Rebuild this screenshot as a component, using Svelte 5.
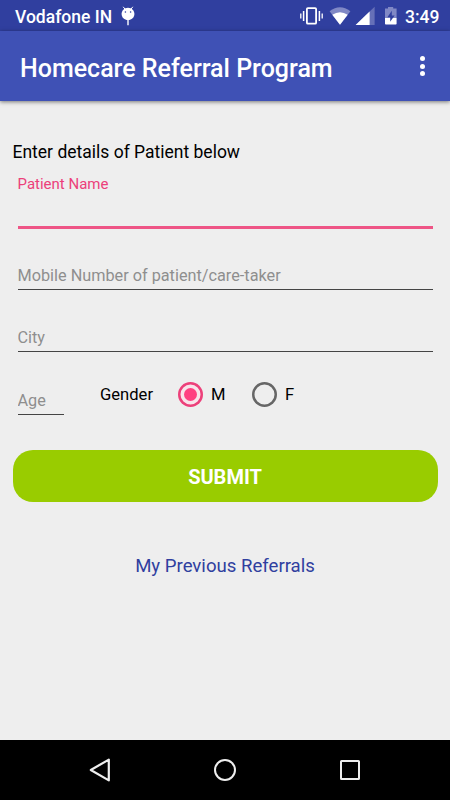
<script>
	let name = '';
	let mobile = '';
	let city = '';
	let age = '';
	let gender = 'M';

	const genders = ['M', 'F'];
</script>

<div class="screen">
	<div class="status-bar">
		<span class="carrier">Vodafone IN</span>
		<svg class="bug" width="14" height="20" viewBox="0 0 14 20" aria-hidden="true">
			<path d="M2.2 0.8 L4.2 3.4 M11.8 0.8 L9.8 3.4" stroke="#fff" stroke-width="1" />
			<path d="M7 1.8 C10.8 1.8 13.4 4.8 13.4 8 C13.4 11.4 10.7 14 7 14 C3.3 14 0.6 11.4 0.6 8 C0.6 4.8 3.2 1.8 7 1.8 Z" fill="#fff" />
			<circle cx="4.4" cy="6" r="0.8" fill="#303f9f" />
			<circle cx="9.6" cy="6" r="0.8" fill="#303f9f" />
			<path d="M7 14 V19.2" stroke="#fff" stroke-width="1.4" />
		</svg>
		<svg class="system" width="100" height="20" viewBox="0 0 100 20" aria-hidden="true">
			<!-- vibrate -->
			<rect x="7.9" y="2.1" width="9.2" height="15.6" rx="1" fill="none" stroke="#fff" stroke-width="1.8" />
			<path d="M4.6 5 V15 M20.4 5 V15" stroke="#fff" stroke-width="1.5" />
			<path d="M1.8 7.5 V12.5 M23.2 7.5 V12.5" stroke="#fff" stroke-width="1.3" />
			<!-- wifi -->
			<path d="M30.6 5.2 Q41 -2.6 51.4 5.2 L41 18.8 Z" fill="#8088c5" />
			<path d="M33.3 8.8 Q41 3.6 48.7 8.8 L41 18.8 Z" fill="#fff" />
			<!-- signal -->
			<path d="M56.6 19 L75.6 0.7 V19 Z" fill="#6670b8" />
			<path d="M56.6 19 L70.6 5.5 V19 Z" fill="#fff" />
			<!-- battery -->
			<path d="M86 2.6 H89 V1 H94.2 V2.6 H97.6 V12 H86 Z" fill="#8088c5" />
			<path d="M86 12 H97.6 V17.8 Q97.6 18.6 96.8 18.6 H86.8 Q86 18.6 86 17.8 Z" fill="#fff" />
			<path d="M92.8 4.8 L88.4 11.2 H91.2 V15.8 L95.6 9.4 H92.8 Z" fill="#303f9f" />
		</svg>
		<span class="clock">3:49</span>
	</div>

	<header class="app-bar">
		<h1>Homecare Referral Program</h1>
		<button class="menu" aria-label="More options">
			<span class="dot"></span>
			<span class="dot"></span>
			<span class="dot"></span>
		</button>
	</header>

	<main class="content">
		<h2>Enter details of Patient below</h2>

		<label class="field name">
			<span>Patient Name</span>
			<input type="text" bind:value={name} />
		</label>
		<input class="field line mobile" type="tel" placeholder="Mobile Number of patient/care-taker" bind:value={mobile} />
		<input class="field line city" type="text" placeholder="City" bind:value={city} />

		<div class="details">
			<input class="line age" type="text" placeholder="Age" bind:value={age} />
			<div class="gender" role="radiogroup" aria-label="Gender">
				<span class="gender-title">Gender</span>
				{#each genders as option}
					<label class="option" class:selected={gender === option}>
						<input type="radio" name="gender" value={option} bind:group={gender} />
						<span class="ring"></span>
						<span class="option-text">{option}</span>
					</label>
				{/each}
			</div>
		</div>

		<button class="submit">SUBMIT</button>
		<button class="previous">My Previous Referrals</button>
	</main>

	<nav class="nav-bar">
		<button aria-label="Back">
			<svg width="24" height="26" viewBox="0 0 24 26">
				<path d="M20.8 2.6 V23.4 L2.8 13 Z" fill="none" stroke="#eee" stroke-width="2.2" stroke-linejoin="round" />
			</svg>
		</button>
		<button aria-label="Home">
			<svg width="24" height="26" viewBox="0 0 24 26">
				<circle cx="12" cy="13" r="10" fill="none" stroke="#eee" stroke-width="2" />
			</svg>
		</button>
		<button aria-label="Recent apps">
			<svg width="24" height="26" viewBox="0 0 24 26">
				<rect x="3" y="4" width="18" height="18" rx="0.5" fill="none" stroke="#eee" stroke-width="2" />
			</svg>
		</button>
	</nav>
</div>

<style>
	:global(body) {
		margin: 0;
	}

	.screen {
		display: flex;
		flex-direction: column;
		width: 450px;
		height: 800px;
		background: #eeeeee;
		font-family: Roboto, sans-serif;
		color: #000;
		overflow: hidden;
	}

	button,
	input {
		box-sizing: border-box;
		margin: 0;
		padding: 0;
		border: 0;
		border-radius: 0;
		background: none;
		font-family: inherit;
		outline: none;
	}

	.status-bar {
		display: flex;
		align-items: center;
		box-sizing: border-box;
		height: 31px;
		padding: 2px 11px 0 15px;
		background: #303f9f;
		color: #fff;
	}

	.carrier {
		font-size: 17.5px;
		font-weight: 500;
		line-height: 20px;
		white-space: nowrap;
		width: 97px;
	}

	.bug {
		margin-left: 8.5px;
		margin-top: -2px;
	}

	.system {
		margin-left: auto;
		margin-top: -2px;
	}

	.clock {
		width: 34px;
		margin-left: 6.5px;
		font-size: 17.5px;
		font-weight: 500;
		line-height: 20px;
	}

	.app-bar {
		display: flex;
		align-items: center;
		justify-content: space-between;
		box-sizing: border-box;
		height: 70px;
		flex: none;
		padding: 4px 18px 0 20px;
		background: #3f51b5;
		box-shadow: 0 1px 4px rgba(0, 0, 0, 0.5);
		color: #fff;
	}

	h1 {
		margin: 0;
		font-size: 25px;
		font-weight: 500;
	}

	.menu {
		display: flex;
		flex-direction: column;
		align-items: center;
		gap: 2.6px;
		width: 19px;
		margin-top: -4px;
	}

	.dot {
		width: 5px;
		height: 5px;
		border-radius: 50%;
		background: #fff;
	}

	.content {
		display: flex;
		flex-direction: column;
		flex: 1;
		padding: 38px 12.5px 0;
	}

	h2 {
		margin: 0;
		font-size: 17.5px;
		font-weight: 400;
		line-height: 26px;
	}

	.field {
		margin: 0 5px;
	}

	.name {
		display: flex;
		flex-direction: column;
		height: 64px;
		padding-top: 9px;
		box-sizing: border-box;
		border-bottom: 3px solid #ee5586;
		color: #ec407a;
		font-size: 15px;
		line-height: 20px;
	}

	.name input {
		flex: 1;
		font-size: 16.25px;
	}

	.line {
		padding-top: 2px;
		border-bottom: 1px solid #444;
		font-size: 16.25px;
	}

	.line::placeholder {
		color: #8e8e8e;
		opacity: 1;
	}

	.mobile {
		height: 31px;
		margin-top: 30px;
	}

	.city {
		height: 31px;
		margin-top: 31px;
	}

	.details {
		display: flex;
		align-items: flex-start;
		padding: 25px 5px 0;
	}

	.age {
		width: 46px;
		height: 31px;
		margin-top: 7px;
		padding-top: 3px;
	}

	.gender {
		display: flex;
		align-items: center;
		height: 34px;
		margin-left: 36.5px;
		font-size: 16.6px;
	}

	.gender-title {
		width: 78px;
	}

	.option {
		display: flex;
		align-items: center;
		width: 74px;
	}

	.option input {
		appearance: none;
		width: 0;
		height: 0;
	}

	.ring {
		display: flex;
		align-items: center;
		justify-content: center;
		width: 25px;
		height: 25px;
		border-radius: 50%;
		box-shadow: inset 0 0 0 2.5px #666;
	}

	.selected .ring {
		background: #f8e4ea;
		box-shadow: inset 0 0 0 2.5px #ec407a;
	}

	.selected .ring::after {
		content: '';
		width: 13px;
		height: 13px;
		border-radius: 50%;
		background: #ff4081;
	}

	.option-text {
		margin-left: 8px;
	}

	.submit {
		height: 52px;
		margin-top: 35px;
		padding-top: 2px;
		border-radius: 20px;
		background: #99cc00;
		color: #fff;
		font-size: 20px;
		font-weight: 700;
	}

	.previous {
		align-self: center;
		height: 30px;
		margin-top: 49px;
		color: #303f9f;
		font-size: 18.6px;
	}

	.nav-bar {
		display: flex;
		align-items: center;
		justify-content: space-between;
		box-sizing: border-box;
		height: 60px;
		padding: 0 88px;
		background: #000;
	}

	.nav-bar svg {
		display: block;
	}
</style>
